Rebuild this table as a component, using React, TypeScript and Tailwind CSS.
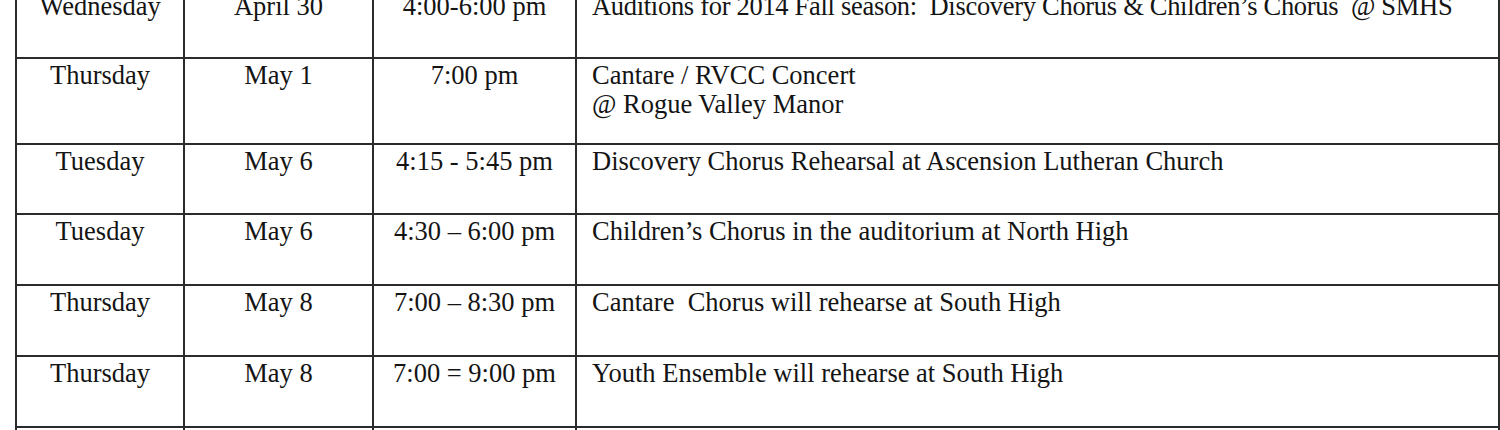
import React from "react";

type Row = {
  day: string;
  date: string;
  time: string;
  lines: string[];
  height: string;
  tight?: boolean;
};

const rows: Row[] = [
  {
    day: "Wednesday",
    date: "April 30",
    time: "4:00-6:00 pm",
    lines: [
      "Auditions for 2014 Fall season:  Discovery Chorus & Children\u2019s Chorus  @ SMHS",
    ],
    height: "h-[69px]",
    tight: true,
  },
  {
    day: "Thursday",
    date: "May 1",
    time: "7:00 pm",
    lines: ["Cantare / RVCC Concert", "@ Rogue Valley Manor"],
    height: "h-[86px]",
  },
  {
    day: "Tuesday",
    date: "May 6",
    time: "4:15 - 5:45 pm",
    lines: ["Discovery Chorus Rehearsal at Ascension Lutheran Church"],
    height: "h-[70px]",
  },
  {
    day: "Tuesday",
    date: "May 6",
    time: "4:30 \u2013 6:00 pm",
    lines: ["Children\u2019s Chorus in the auditorium at North High"],
    height: "h-[71px]",
  },
  {
    day: "Thursday",
    date: "May 8",
    time: "7:00 \u2013 8:30 pm",
    lines: ["Cantare  Chorus will rehearse at South High"],
    height: "h-[71px]",
  },
  {
    day: "Thursday",
    date: "May 8",
    time: "7:00 = 9:00 pm",
    lines: ["Youth Ensemble will rehearse at South High"],
    height: "h-[71px]",
  },
  {
    day: "",
    date: "",
    time: "",
    lines: [""],
    height: "h-[71px]",
  },
];

export default function App() {
  return (
    <main className="w-[1500px] h-[430px] overflow-hidden bg-white">
      <div
        className="ml-[15px] mt-[-10px] w-[1485px] border-l-2 border-[#2b2b2b] text-[26.5px] leading-[29px] text-[#141414]"
        style={{ fontFamily: '"Liberation Serif", "Times New Roman", serif' }}
      >
        {rows.map((row, i) => (
          <div
            key={i}
            className={`grid grid-cols-[168px_189px_203px_923px] ${row.height}`}
          >
            <Cell center>{row.day}</Cell>
            <Cell center>{row.date}</Cell>
            <Cell center>{row.time}</Cell>
            <Cell>
              {row.lines.map((line, j) => (
                <div
                  key={j}
                  className={`whitespace-pre ${row.tight ? "tracking-[-0.3px]" : ""}`}
                >
                  {line}
                </div>
              ))}
            </Cell>
          </div>
        ))}
      </div>
    </main>
  );
}

function Cell({
  children,
  center,
}: {
  children: React.ReactNode;
  center?: boolean;
}) {
  return (
    <div
      className={`pt-[2px] border-r-2 border-b-2 border-[#2b2b2b] ${
        center ? "text-center" : "pl-[15px]"
      }`}
    >
      {children}
    </div>
  );
}
